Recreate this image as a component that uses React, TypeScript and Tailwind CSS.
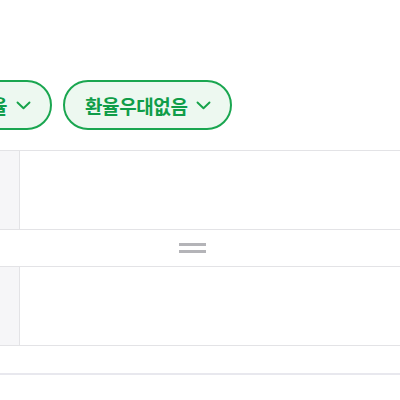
import React from "react";

function Chevron() {
  return (
    <svg width="15" height="9" viewBox="0 0 15 9" fill="none" className="shrink-0">
      <path d="M1.5 1.5 L7.5 7.3 L13.5 1.5" stroke="#16a34a" strokeWidth="1.9" strokeLinecap="round" strokeLinejoin="round" />
    </svg>
  );
}

function Pill({ label }: { label: string }) {
  return (
    <button
      type="button"
      className="flex h-[50px] shrink-0 items-center gap-[9px] whitespace-nowrap rounded-full border-2 border-[#1aa650] bg-[#edf8f0] pl-[20px] pr-[19px] text-[19px] font-bold text-[#0f9d48]"
    >
      <span className="leading-none tracking-[-0.4px]">{label}</span>
      <Chevron />
    </button>
  );
}

function Row({ label }: { label: string }) {
  return (
    <div className="flex h-[80px] border-y border-[#e3e3e6]">
      <div className="flex w-[35px] shrink-0 items-center justify-end border-r border-[#e3e3e6] bg-[#f6f6f8] pr-[20px]">
        <span className="whitespace-nowrap text-[11px] text-[#c4c4c8]">{label}</span>
      </div>
      <div className="flex-1 bg-white" />
    </div>
  );
}

export default function App() {
  return (
    <div
      className="h-[400px] w-[400px] overflow-hidden bg-white"
      style={{ fontFamily: '"Noto Sans CJK KR", "Noto Sans", sans-serif' }}
    >
      <div className="flex pt-[80px]">
        <div className="flex w-[52px] shrink-0 justify-end">
          <Pill label="적용환율" />
        </div>
        <div className="ml-[11px]">
          <Pill label="환율우대없음" />
        </div>
      </div>

      <div className="-ml-[15px] mt-[20px] w-[415px]">
        <Row label="보내는 금액" />
        <div className="flex h-[36px] flex-col items-center justify-center gap-[4px]">
          <div className="h-[3px] w-[27px] bg-[#b4b4b8]" />
          <div className="h-[3px] w-[27px] bg-[#b4b4b8]" />
        </div>
        <Row label="받는 금액" />
        <div className="mt-[27px] h-[2px] bg-[#e8e8ee]" />
      </div>
    </div>
  );
}
